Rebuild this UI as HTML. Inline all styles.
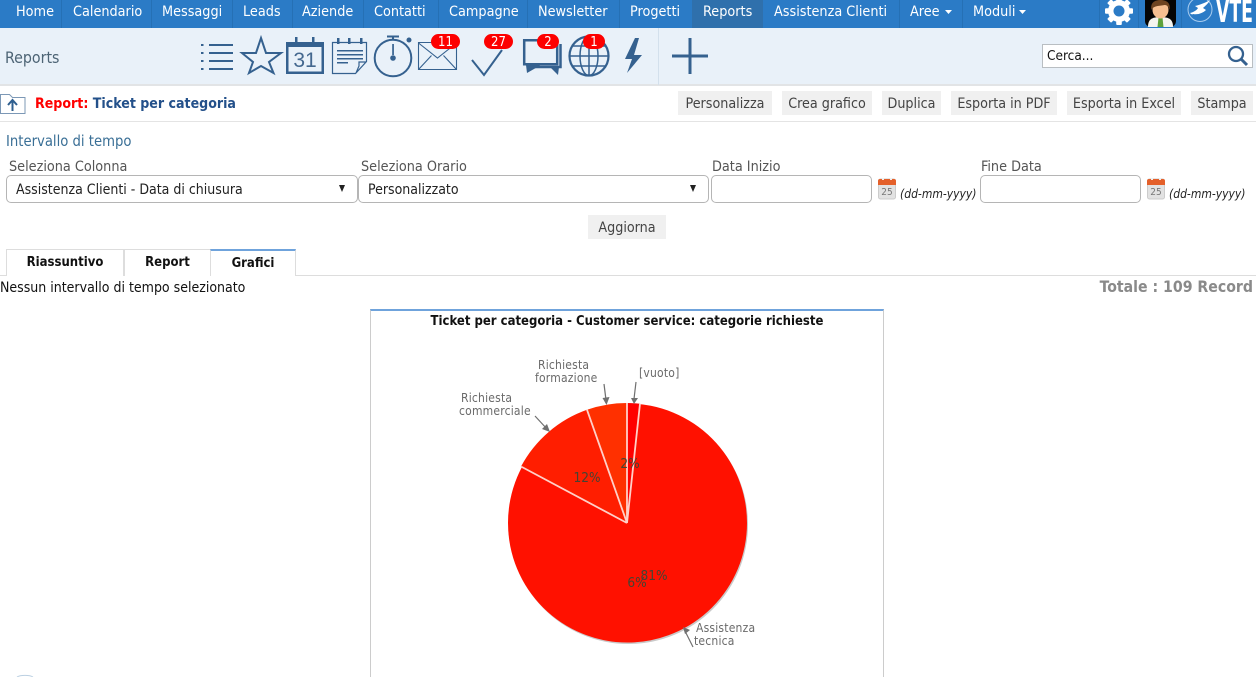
<!DOCTYPE html>
<html lang="it"><head><meta charset="utf-8"><title>Reports</title>
<style>
*{box-sizing:border-box}
html,body{margin:0;padding:0;background:#fff;width:1256px;height:677px;overflow:hidden}
body{font-family:"DejaVu Sans","Liberation Sans",sans-serif;font-stretch:condensed;font-size:14px;color:#222;position:relative}
.a{position:absolute;white-space:nowrap}
#nav{position:absolute;left:0;top:0;width:1256px;height:28px;background:#2b7bc6}
#nav .t{position:absolute;top:0;height:28px;line-height:24px;color:#fff;font-size:14.3px;white-space:nowrap}
#nav .s{position:absolute;top:0;width:1px;height:28px;background:#2570b5}
#bar{position:absolute;left:0;top:28px;width:1256px;height:58px;background:#e9f1f9;border-bottom:2px solid #e2e4e6}
.btn{position:absolute;top:91px;height:24px;line-height:26px;background:#f0f0f0;color:#444;text-align:center;font-size:14.2px;white-space:nowrap}
.lab{position:absolute;top:159px;color:#555;font-size:14.3px;line-height:16px;white-space:nowrap}
.fld{position:absolute;top:175px;height:28px;border:1px solid #b5b5b5;border-radius:5px;background:#fff;line-height:28px;padding-left:9px;color:#222;font-size:14px;white-space:nowrap}
.arr{position:absolute;top:9px;width:0;height:0;border-left:3.5px solid transparent;border-right:3.5px solid transparent;border-top:7px solid #222}
.fmt{position:absolute;top:187px;font-style:italic;font-size:12px;color:#222;line-height:15px;white-space:nowrap}
.tab{position:absolute;top:249px;height:27px;border:1px solid #ddd;border-bottom:0;font-weight:bold;font-size:13px;color:#111;text-align:center;line-height:26px;background:#fff}
svg{position:absolute;overflow:visible}
svg text{font-family:"DejaVu Sans","Liberation Sans",sans-serif;font-stretch:condensed}
</style></head><body>

<div id="nav">
<span class="t" style="left:16px">Home</span><span class="s" style="left:61px"></span>
<span class="t" style="left:73px">Calendario</span><span class="s" style="left:151px"></span>
<span class="t" style="left:162px">Messaggi</span><span class="s" style="left:232px"></span>
<span class="t" style="left:243px">Leads</span><span class="s" style="left:292px"></span>
<span class="t" style="left:302px">Aziende</span><span class="s" style="left:363px"></span>
<span class="t" style="left:374px">Contatti</span><span class="s" style="left:438px"></span>
<span class="t" style="left:449px">Campagne</span><span class="s" style="left:527px"></span>
<span class="t" style="left:538px">Newsletter</span><span class="s" style="left:619px"></span>
<span class="t" style="left:630px">Progetti</span>
<span style="position:absolute;left:692px;top:0;width:71px;height:28px;background:#2f70ac"></span>
<span class="t" style="left:703px">Reports</span>
<span class="t" style="left:774px">Assistenza Clienti</span><span class="s" style="left:899px"></span>
<span class="t" style="left:910px">Aree</span><span class="s" style="left:962px"></span>
<span class="t" style="left:973px">Moduli</span><span class="s" style="left:1099px"></span><span class="s" style="left:1138px"></span><span class="s" style="left:1181px"></span>
</div>
<svg style="left:0;top:0" width="1256" height="28" viewBox="0 0 1256 28">
<path d="M945 10h7l-3.500 4zM1019 10h7l-3.500 4z" fill="#fff"/>
<g transform="translate(1119 11)">
<g fill="#fff"><rect x="-2.800" y="-14" width="5.600" height="28" rx="1"/><rect x="-2.800" y="-14" width="5.600" height="28" rx="1" transform="rotate(45)"/><rect x="-2.800" y="-14" width="5.600" height="28" rx="1" transform="rotate(90)"/><rect x="-2.800" y="-14" width="5.600" height="28" rx="1" transform="rotate(135)"/><circle r="11"/></g>
<circle r="5.500" fill="#2b7bc6"/>
</g>
<path d="M1145 0h31v21a6 6 0 0 1-6 6h-19a6 6 0 0 1-6-6z" fill="#050505"/>
<path d="M1148 27c0-7 3-10 12.500-10s12.500 3 12.500 10z" fill="#f4f4ee"/>
<path d="M1158.500 17.500h4l1 9.500h-6z" fill="#5da13a"/>
<ellipse cx="1160.500" cy="10" rx="8" ry="8.500" fill="#f6bf90"/>
<path d="M1151.500 10c-1.500-7 3-10 9-10s10.500 3 9 10c-1-4-3-5-5-5-3 1-11 0-13 5z" fill="#6e4420"/>
<circle cx="1200" cy="9.500" r="12" fill="none" stroke="#a9cdef" stroke-width="1"/>
<path d="M1190 13c4-1 7-3 8-5l-3-2c4-1 10-3 15-6-2 4-5 6-7 8l3 2c-3 3-8 5-13 4-1 1-2 0-3-1z" fill="#fff"/>
<text x="1216" y="22" fill="#fff" font-size="31" font-weight="bold" textLength="37" lengthAdjust="spacingAndGlyphs">VTE</text>
</svg>

<div id="bar"></div>
<div class="a" style="left:5px;top:48px;font-size:15.8px;line-height:19px;color:#4d6475">Reports</div>
<div class="a" style="left:658px;top:28px;width:1px;height:57px;background:#d3e0ec"></div>

<svg style="left:0;top:0" width="1256" height="86" viewBox="0 0 1256 86">
<g fill="#35618f" stroke="none">
<path d="M201 44h2.500v2H201zM201 52h2.500v2H201zM201 60h2.500v2H201zM201 68h2.500v2H201zM209 44h24v2h-24zM209 52h24v2h-24zM209 60h24v2h-24zM209 68h24v2h-24z"/>
<path d="M286 42h9v-5h2.500v5h14.500v-5h2.500v5h9.500v32h-38zM288.500 47v24.500h33V47z" fill-rule="evenodd"/>
<path d="M337 38h2.500v6H337zM348 38h2.500v6H348zM360 38h2.500v6H360zM337 50h26v1.500h-26zM337 54h26v1.500h-26zM337 58h26v1.500h-26zM337 62h11v1.500h-11z"/>
<path d="M387 35.500h12V37.500h-12zM392 37h2v3h-2zM392.200 44h1.700v11h-1.700z"/><circle cx="393" cy="58" r="2.800"/><circle cx="409" cy="40" r="2.500"/>
<path d="M635 38L625 59H632L627 73L642 55H634L639 38z"/>
<path d="M672 54.500h36v3h-36zM688.500 38h3v36h-3z"/>
</g>
<g fill="none" stroke="#35618f">
<path d="M261 38 L266 53 L281 53 L269 62 L273.500 73 L261 66 L249 73 L253 62 L242 53 L256 53z" stroke-width="2"/>
<path d="M332.500 42.500h34v19l-11 12h-23zM366 62h-7v4l-3 7" stroke-width="1.200"/>
<circle cx="393" cy="58" r="18.300" stroke-width="2"/>
<path d="M418.500 42.500h38v27h-38zM418.500 43l19 15 19-15M418.500 69.500l13-14M456.500 69.500l-13-14" stroke-width="1.100"/>
<path d="M472 60l12 15 18-25" stroke-width="2"/>
<path d="M524.200 40.200h33v24h-33z" stroke-width="2.500"/>
<path d="M560.500 44v23h-28" stroke-width="2.500"/>
<circle cx="589" cy="56" r="19.500" stroke-width="2.200"/>
<ellipse cx="589" cy="56" rx="9" ry="19.500" stroke-width="1.500"/>
<path d="M589 36v40M570 56h38M572.500 46h33M572.500 66h33" stroke-width="1.500"/>
</g>
<path d="M526 65h15l-14 8zM550 67h9l-1 8z" fill="#35618f"/>
<text x="305" y="67" fill="#44688f" font-size="21" text-anchor="middle" style="font-family:'Liberation Sans',sans-serif">31</text>
<g font-size="13" fill="#fff" text-anchor="middle">
<rect x="431" y="34" width="29" height="15" rx="7.500" fill="#fd0000"/><text x="445.500" y="46">11</text>
<rect x="484" y="34" width="29" height="15" rx="7.500" fill="#fd0000"/><text x="498.500" y="46">27</text>
<rect x="537" y="34" width="22" height="15" rx="7.500" fill="#fd0000"/><text x="548" y="46">2</text>
<rect x="583" y="34" width="22" height="15" rx="7.500" fill="#fd0000"/><text x="594" y="46">1</text>
</g>
</svg>

<div class="a" style="left:1042px;top:44px;width:211px;height:24px;background:#fff;border:1px solid #b9bec2;line-height:22px;padding-left:4px;font-size:13.5px;color:#111">Cerca...</div>
<svg style="left:1226px;top:46px" width="24" height="22" viewBox="0 0 24 22"><circle cx="10" cy="8" r="7" fill="none" stroke="#35618f" stroke-width="2.300"/><path d="M15 13l6 6" stroke="#35618f" stroke-width="3"/></svg>

<svg style="left:0;top:93px" width="26" height="22" viewBox="0 0 26 22"><path d="M.5 1.500h9l3 3h12.500v16H.5z" fill="#fff" stroke="#7c98b6"/><path d="M12.500 8v10M8 12l4.500-5 4.500 5" fill="none" stroke="#2f5f8f" stroke-width="2"/></svg>
<div class="a" style="left:35px;top:95px;font-weight:bold;font-size:14.05px;line-height:18px"><span style="color:#f00">Report:</span> <span style="color:#23508a">Ticket per categoria</span></div>
<div class="btn" style="left:678px;width:94px">Personalizza</div>
<div class="btn" style="left:782px;width:90px">Crea grafico</div>
<div class="btn" style="left:882px;width:59px">Duplica</div>
<div class="btn" style="left:951px;width:106px">Esporta in PDF</div>
<div class="btn" style="left:1067px;width:114px">Esporta in Excel</div>
<div class="btn" style="left:1191px;width:62px">Stampa</div>
<div class="a" style="left:0;top:121px;width:1256px;height:1px;background:#e4e4e4"></div>

<div class="a" style="left:6px;top:133px;font-size:14.7px;line-height:18px;color:#3a6f96">Intervallo di tempo</div>
<div class="lab" style="left:9px">Seleziona Colonna</div>
<div class="lab" style="left:361px">Seleziona Orario</div>
<div class="lab" style="left:712px">Data Inizio</div>
<div class="lab" style="left:981px">Fine Data</div>
<div class="fld" style="left:6px;width:352px">Assistenza Clienti - Data di chiusura<span class="arr" style="left:332px"></span></div>
<div class="fld" style="left:358px;width:351px">Personalizzato<span class="arr" style="left:331px"></span></div>
<div class="fld" style="left:711px;width:161px"></div>
<div class="fld" style="left:980px;width:161px"></div>
<svg style="left:878px;top:178px" width="18" height="22" viewBox="0 0 18 22"><rect x=".5" y="1" width="17" height="20" rx="2" fill="#e2e2e2" stroke="#ccc"/><path d="M0 3a2 2 0 0 1 2-2h14a2 2 0 0 1 2 2v4H0z" fill="#e4602a"/><path d="M4 0h2v2H4zM12 0h2v2h-2z" fill="#f0f0f0"/><text x="9" y="17" font-size="10" fill="#777" text-anchor="middle">25</text></svg>
<svg style="left:1147px;top:178px" width="18" height="22" viewBox="0 0 18 22"><rect x=".5" y="1" width="17" height="20" rx="2" fill="#e2e2e2" stroke="#ccc"/><path d="M0 3a2 2 0 0 1 2-2h14a2 2 0 0 1 2 2v4H0z" fill="#e4602a"/><path d="M4 0h2v2H4zM12 0h2v2h-2z" fill="#f0f0f0"/><text x="9" y="17" font-size="10" fill="#777" text-anchor="middle">25</text></svg>
<div class="fmt" style="left:900px">(dd-mm-yyyy)</div>
<div class="fmt" style="left:1169px">(dd-mm-yyyy)</div>
<div class="btn" style="left:588px;top:215px;width:78px">Aggiorna</div>

<div class="a" style="left:0;top:275px;width:1256px;height:1px;background:#ddd"></div>
<div class="tab" style="left:6px;width:118px">Riassuntivo</div>
<div class="tab" style="left:124px;width:87px">Report</div>
<div class="tab" style="left:210px;width:86px;border-top:2px solid #6fa3dc;line-height:26px">Grafici</div>
<div class="a" style="left:0;top:279px;font-size:14px;line-height:18px;color:#111">Nessun intervallo di tempo selezionato</div>
<div class="a" style="right:3px;top:277px;font-weight:bold;font-size:15.7px;line-height:19px;color:#8a8a8a">Totale : 109 Record</div>

<div class="a" style="left:370px;top:309px;width:514px;height:368px;border:1px solid #ccc;border-top:2px solid #6fa3dc;border-bottom:0;background:#fff"></div>
<svg style="left:0;top:0" width="1256" height="677" viewBox="0 0 1256 677">
<text x="627" y="325" font-size="13" font-weight="bold" fill="#111" text-anchor="middle">Ticket per categoria - Customer service: categorie richieste</text>
<circle cx="628.500" cy="524.500" r="119.500" fill="#c9c9c9"/>
<circle cx="627.500" cy="523" r="119.500" fill="#ff1100"/>
<path d="M627 523L521 466.500A120 120 0 0 1 587 409.800z" fill="#ff1e00"/>
<path d="M627 523L587 409.800A120 120 0 0 1 627 403z" fill="#ff3000"/>
<path d="M627 523V403A120 120 0 0 1 640 403.700z" fill="#ff0000"/>
<path d="M627 523L521 466.500M627 523L587 409.800M627 523V403M627 523L640 403.700" stroke="#ffd0c8" stroke-width="1.800" fill="none"/>
<g font-size="13.500" fill="#443" text-anchor="middle">
<text x="587" y="482">12%</text><text x="630" y="468">2%</text><text x="654" y="580">81%</text><text x="637" y="587">6%</text>
</g>
<g font-size="12" fill="#6a6a6a" letter-spacing=".2">
<text x="461" y="402">Richiesta</text><text x="459" y="415">commerciale</text>
<text x="538" y="369">Richiesta</text><text x="535" y="382">formazione</text>
<text x="639" y="377">[vuoto]</text>
<text x="696" y="632">Assistenza</text><text x="694" y="645">tecnica</text>
</g>
<g stroke="#707070" stroke-width="1.200" fill="#707070">
<path d="M535 416l12 13" fill="none"/><path d="M550 432l-8-3 5-5z" stroke="none"/>
<path d="M604 384l2 16" fill="none"/><path d="M606.500 405l-4-7 7-1z" stroke="none"/>
<path d="M636 382l-2 17" fill="none"/><path d="M634 404l-3-6 7 0z" stroke="none"/>
<path d="M693 647l-9-18" fill="none"/><path d="M683 627l7 3-5 4z" stroke="none"/>
</g>
<path d="M17 677a9 3 0 0 1 16 0" fill="none" stroke="#bcd0e2" stroke-width="1"/>
</svg>
</body></html>
